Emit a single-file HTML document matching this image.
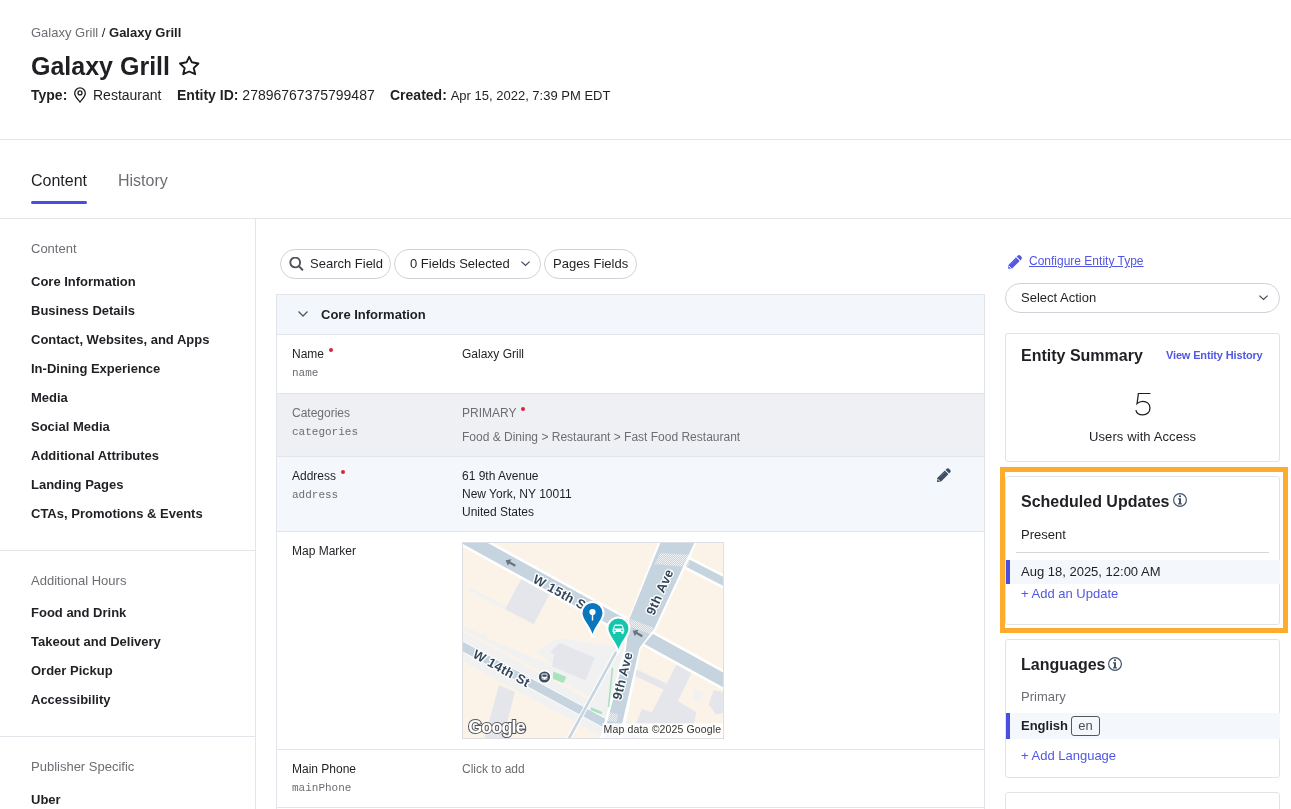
<!DOCTYPE html>
<html><head><meta charset="utf-8">
<style>
*{box-sizing:border-box;margin:0;padding:0}
html,body{width:1291px;height:809px;overflow:hidden;background:#fff}
body{-webkit-font-smoothing:antialiased}
.a{will-change:transform}
body{font-family:"Liberation Sans",sans-serif;color:#1f2024;position:relative}
.a{position:absolute;white-space:nowrap}
.b{font-weight:bold}
.g{color:#6c6e73}
.mono{font-family:"Liberation Mono",monospace}
.pill{position:absolute;height:30px;border:1px solid #cfd2d8;border-radius:15px;background:#fff}
.req{display:inline-block;width:4px;height:4px;border-radius:2px;background:#d9253a;vertical-align:top;margin:1px 0 0 5px}
.card{position:absolute;border:1px solid #e1e3e9;border-radius:3px;background:#fff}
.hl{position:absolute;background:#e3e5ea}
</style></head><body>
<!-- header -->
<div class="a" style="left:31px;top:25px;font-size:13px;line-height:15px"><span class="g">Galaxy Grill</span> / <span class="b">Galaxy Grill</span></div>
<div class="a b" style="left:31px;top:51px;font-size:25px;line-height:30px">Galaxy Grill</div>
<div class="a" style="left:178px;top:54px;width:24px;height:24px"><svg width="24" height="24" viewBox="0 0 24 24"><path d="M11.2 2.8L13.9 8.3L20.4 9.5L15.7 14.1L17.2 20.2L11.2 17.5L5.2 20.2L6.7 14.1L2 9.5L8.5 8.3Z" fill="none" stroke="#1a1a1a" stroke-width="1.9" stroke-linejoin="round"/></svg></div>
<div class="a" style="left:31px;top:87px;font-size:14px;line-height:16px"><span class="b">Type:</span></div>
<div class="a" style="left:72px;top:86px;width:16px;height:18px"><svg width="16" height="18" viewBox="0 0 16 18"><path d="M8 16.1C6.6 14 2.7 10.7 2.7 7.2A5.3 5.3 0 0 1 13.3 7.2C13.3 10.7 9.4 14 8 16.1Z" fill="none" stroke="#1a1a1a" stroke-width="1.3" stroke-linejoin="round"/><circle cx="8" cy="6.9" r="2" fill="none" stroke="#1a1a1a" stroke-width="1.3"/></svg></div>
<div class="a" style="left:93px;top:87px;font-size:14px;line-height:16px">Restaurant</div>
<div class="a" style="left:177px;top:87px;font-size:14px;line-height:16px"><span class="b">Entity ID:</span> 27896767375799487</div>
<div class="a" style="left:390px;top:87px;font-size:14px;line-height:16px"><span class="b">Created:</span> <span style="font-size:13px">Apr 15, 2022, 7:39 PM EDT</span></div>
<div class="hl" style="left:0;top:139px;width:1291px;height:1px"></div>

<!-- tabs -->
<div class="a" style="left:31px;top:172px;font-size:16px;line-height:18px">Content</div>
<div class="a g" style="left:118px;top:172px;font-size:16px;line-height:18px">History</div>
<div class="a" style="left:31px;top:201px;width:56px;height:3px;background:#4a4ee0;border-radius:2px"></div>
<div class="hl" style="left:0;top:218px;width:1291px;height:1px"></div>
<div class="hl" style="left:255px;top:219px;width:1px;height:590px"></div>

<!-- sidebar -->
<div class="a g" style="left:31px;top:241px;font-size:13px;line-height:15px">Content</div>
<div class="a b" style="left:31px;top:274px;font-size:13px;line-height:15px">Core Information</div>
<div class="a b" style="left:31px;top:303px;font-size:13px;line-height:15px">Business Details</div>
<div class="a b" style="left:31px;top:332px;font-size:13px;line-height:15px">Contact, Websites, and Apps</div>
<div class="a b" style="left:31px;top:361px;font-size:13px;line-height:15px">In-Dining Experience</div>
<div class="a b" style="left:31px;top:390px;font-size:13px;line-height:15px">Media</div>
<div class="a b" style="left:31px;top:419px;font-size:13px;line-height:15px">Social Media</div>
<div class="a b" style="left:31px;top:448px;font-size:13px;line-height:15px">Additional Attributes</div>
<div class="a b" style="left:31px;top:477px;font-size:13px;line-height:15px">Landing Pages</div>
<div class="a b" style="left:31px;top:506px;font-size:13px;line-height:15px">CTAs, Promotions &amp; Events</div>
<div class="hl" style="left:0;top:550px;width:255px;height:1px"></div>
<div class="a g" style="left:31px;top:573px;font-size:13px;line-height:15px">Additional Hours</div>
<div class="a b" style="left:31px;top:605px;font-size:13px;line-height:15px">Food and Drink</div>
<div class="a b" style="left:31px;top:634px;font-size:13px;line-height:15px">Takeout and Delivery</div>
<div class="a b" style="left:31px;top:663px;font-size:13px;line-height:15px">Order Pickup</div>
<div class="a b" style="left:31px;top:692px;font-size:13px;line-height:15px">Accessibility</div>
<div class="hl" style="left:0;top:736px;width:255px;height:1px"></div>
<div class="a g" style="left:31px;top:759px;font-size:13px;line-height:15px">Publisher Specific</div>
<div class="a b" style="left:31px;top:792px;font-size:13px;line-height:15px">Uber</div>

<!-- table -->
<div class="pill" style="left:280px;top:249px;width:111px"></div>
<svg class="a" style="left:288px;top:257px" width="16" height="15" viewBox="0 0 16 15"><circle cx="7.2" cy="5.5" r="4.9" fill="none" stroke="#515358" stroke-width="1.9"/><path d="M10.8 9.1l3.6 3.7" stroke="#515358" stroke-width="2" stroke-linecap="round"/></svg>
<div class="a" style="left:310px;top:256px;font-size:13px;line-height:15px">Search Field</div>
<div class="pill" style="left:394px;top:249px;width:147px"></div>
<div class="a" style="left:410px;top:256px;font-size:13px;line-height:15px">0 Fields Selected</div>
<svg class="a" style="left:520px;top:259px" width="11" height="9" viewBox="0 0 11 9"><path d="M1.4 2.6l4.1 3.9 4.1-3.9" fill="none" stroke="#3e4c5e" stroke-width="1.2"/></svg>
<div class="pill" style="left:544px;top:249px;width:93px"></div>
<div class="a" style="left:553px;top:256px;font-size:13px;line-height:15px">Pages Fields</div>
<div class="a" style="left:276px;top:294px;width:709px;height:515px;border:1px solid #e1e4ea;border-bottom:none"></div>
<div class="a" style="left:277px;top:295px;width:707px;height:40px;background:#f3f6fb;border-bottom:1px solid #e1e4ea"></div>
<svg class="a" style="left:297px;top:309px" width="12" height="10" viewBox="0 0 12 10"><path d="M1.5 2.5l4.5 4.5 4.5-4.5" fill="none" stroke="#4a5a6e" stroke-width="1.3"/></svg>
<div class="a b" style="left:321px;top:307px;font-size:13px;line-height:15px">Core Information</div>
<div class="a" style="left:277px;top:393px;width:707px;height:63px;background:#eff0f4;border-top:1px solid #e1e4ea"></div>
<div class="a" style="left:277px;top:456px;width:707px;height:75px;background:#f4f7fc;border-top:1px solid #e1e4ea"></div>
<div class="hl" style="left:277px;top:531px;width:707px;height:1px;background:#e1e4ea"></div>
<div class="hl" style="left:277px;top:749px;width:707px;height:1px;background:#e1e4ea"></div>
<div class="hl" style="left:277px;top:807px;width:707px;height:1px;background:#e1e4ea"></div>
<div class="a" style="left:292px;top:347px;font-size:12px;line-height:14px">Name<span class="req"></span></div>
<div class="a mono g" style="left:292px;top:367px;font-size:11px;line-height:13px">name</div>
<div class="a" style="left:462px;top:347px;font-size:12px;line-height:14px">Galaxy Grill</div>
<div class="a g" style="left:292px;top:406px;font-size:12px;line-height:14px">Categories</div>
<div class="a mono g" style="left:292px;top:426px;font-size:11px;line-height:13px">categories</div>
<div class="a g" style="left:462px;top:406px;font-size:12px;line-height:14px">PRIMARY<span class="req"></span></div>
<div class="a g" style="left:462px;top:430px;font-size:12px;line-height:14px">Food &amp; Dining &gt; Restaurant &gt; Fast Food Restaurant</div>
<div class="a" style="left:292px;top:469px;font-size:12px;line-height:14px">Address<span class="req"></span></div>
<div class="a mono g" style="left:292px;top:489px;font-size:11px;line-height:13px">address</div>
<div class="a" style="left:462px;top:467px;font-size:12px;line-height:18px">61 9th Avenue<br>New York, NY 10011<br>United States</div>
<svg class="a" style="left:936px;top:467px" width="16" height="16" viewBox="0 0 16 16"><g transform="translate(1.0,15.0) rotate(-45)"><path d="M0 0 L2.9 -2.6 L15.9 -2.6 Q17.9 -2.6 17.9 -0.6 L17.9 0.6 Q17.9 2.6 15.9 2.6 L2.9 2.6 Z" fill="#3d4f63"/><path d="M14.1 -3 L14.1 3" stroke="#f4f7fc" stroke-width="1"/><path d="M2.5 -1.5 L2.5 1.6" stroke="#f4f7fc" stroke-width="0.9" stroke-linecap="round"/><path d="M5.7 -1.5 L12.5 -1.5" stroke="#f4f7fc" stroke-width="0.5" stroke-dasharray="0.6 0.7" opacity="0.7"/></g></svg>
<div class="a" style="left:292px;top:544px;font-size:12px;line-height:14px">Map Marker</div>
<svg class="a" style="left:462px;top:542px" width="262" height="197" viewBox="0 0 262 197">
<defs><clipPath id="mc"><rect x="0" y="0" width="262" height="197"/></clipPath><pattern id="hx" width="2" height="2" patternUnits="userSpaceOnUse"><rect width="1" height="1" fill="#fff" opacity="0.7"/><rect x="1" y="1" width="1" height="1" fill="#fff" opacity="0.7"/></pattern></defs>
<g clip-path="url(#mc)">
<rect width="262" height="197" fill="#fbf3e8"/>
<polygon points="-5.0,84.0 160.0,172.0 168.0,108.0 150.0,104.0 100.0,96.0 88.0,100.0 74.0,110.0 60.0,98.0 20.0,92.0 -5.0,82.0" fill="#f1f1f2"/>
<polygon points="25.0,96.0 96.0,126.0 74.0,110.0 60.0,98.0 25.0,80.0" fill="#fbf3e8"/>
<line x1="-10" y1="98.7" x2="272" y2="251" stroke="#f1f1f2" stroke-width="26"/>
<polygon points="123.0,114.0 150.0,104.0 170.0,108.0 150.0,180.0 128.0,168.0" fill="#f1f1f2"/>
<line x1="7.4" y1="47" x2="43.2" y2="65.5" stroke="#f1f1f2" stroke-width="3.5"/>
<polygon points="60.5,34.6 87.7,51.9 71.7,82.2 43.2,67.3" fill="#e5e6eb"/>
<polygon points="97.6,101.0 132.8,115.8 123.6,138.6 90.2,124.4 92.0,112.0 88.0,110.0" fill="#e5e6eb"/>
<polygon points="37.0,143.0 53.0,150.0 40.8,197.0 22.2,197.0" fill="#e5e6eb"/>
<polygon points="171.3,125.7 204.6,141.7 202.2,147.9 171.3,133.1" fill="#e5e6eb"/>
<polygon points="214.5,122.6 229.4,131.2 215.8,159.0 234.3,170.2 231.8,182.5 173.7,182.5 179.9,167.1 189.8,170.2 202.2,146.7 207.1,136.8" fill="#e5e6eb"/>
<polygon points="251.6,147.9 262.7,150.4 262.7,170.2 254.1,172.6 246.7,162.7" fill="#e5e6eb"/>
<polygon points="231.8,146.7 241.7,150.4 236.8,160.3 230.6,157.8" fill="#f1f1f2"/>
<line x1="-10" y1="-11.3" x2="272" y2="143.8" stroke="#ffffff" stroke-width="18"/><line x1="-10" y1="-11.3" x2="272" y2="143.8" stroke="#c6d4df" stroke-width="13"/>
<line x1="200" y1="8" x2="272" y2="45" stroke="#ffffff" stroke-width="13"/><line x1="200" y1="8" x2="272" y2="45" stroke="#c6d4df" stroke-width="8"/>
<line x1="-10" y1="98.7" x2="272" y2="251" stroke="#ffffff" stroke-width="10.0"/><line x1="-10" y1="98.7" x2="272" y2="251" stroke="#c6d4df" stroke-width="8.5"/>
<line x1="154" y1="110" x2="105" y2="200" stroke="#ffffff" stroke-width="4.6"/><line x1="154" y1="110" x2="105" y2="200" stroke="#c6d4df" stroke-width="2.6"/>
<polygon points="197.0,-2.0 236.0,-2.0 194.0,88.0 179.0,106.0 160.0,200.0 137.0,200.0 162.0,108.0 166.0,78.0" fill="#ffffff"/>
<polygon points="199.5,-2.0 233.6,-2.0 192.3,86.5 177.4,105.9 156.0,200.0 140.0,200.0 163.8,108.4 167.6,76.6" fill="#c6d4df"/>
<polygon points="198.0,11.0 230.0,13.0 226.0,25.0 193.0,22.0" fill="url(#hx)"/>
<polygon points="169.0,77.0 192.0,86.0 188.0,92.0 166.0,84.0" fill="url(#hx)"/>
<polygon points="146.0,170.0 156.0,172.0 155.0,180.0 145.0,179.0" fill="url(#hx)"/>
<polygon points="91.4,129.4 104.4,134.9 101.3,141.1 90.8,136.8" fill="#a9e2bd"/>
<polygon points="129.2,165.2 140.4,170.0 139.5,172.5 128.5,168.0" fill="#a9e2bd"/>
<line x1="150.5" y1="126" x2="146.5" y2="165" stroke="#a9e2bd" stroke-width="1.6"/>
<g fill="#6b747e">
<path transform="translate(48.5,21) rotate(29)" d="M-5.5 0 L-1 -3.6 L-1 -1.1 L5.5 -1.1 L5.5 1.1 L-1 1.1 L-1 3.6 Z"/>
<path transform="translate(175.5,91.5) rotate(29)" d="M-5.5 0 L-1 -3.6 L-1 -1.1 L5.5 -1.1 L5.5 1.1 L-1 1.1 L-1 3.6 Z"/>
</g>
<text transform="translate(70,40) rotate(29)" style="font-family:Liberation Sans,sans-serif;font-weight:bold;font-size:13px;fill:#34475a;stroke:#fff;stroke-width:2.6px;paint-order:stroke;stroke-linejoin:round;letter-spacing:0.4px">W 15th St</text>
<text transform="translate(10,115) rotate(29)" style="font-family:Liberation Sans,sans-serif;font-weight:bold;font-size:13px;fill:#34475a;stroke:#fff;stroke-width:2.6px;paint-order:stroke;stroke-linejoin:round;letter-spacing:0.4px">W 14th St</text>
<text transform="translate(192,74) rotate(-66)" style="font-family:Liberation Sans,sans-serif;font-weight:bold;font-size:13px;fill:#34475a;stroke:#fff;stroke-width:2.6px;paint-order:stroke;stroke-linejoin:round;letter-spacing:0.4px">9th Ave</text>
<text transform="translate(159,158.5) rotate(-76)" style="font-family:Liberation Sans,sans-serif;font-weight:bold;font-size:13px;fill:#34475a;stroke:#fff;stroke-width:2.6px;paint-order:stroke;stroke-linejoin:round;letter-spacing:0.4px">9th Ave</text>
<circle cx="82.5" cy="135" r="6.9" fill="#fff"/><circle cx="82.5" cy="135" r="5.6" fill="#3d4b5c"/><rect x="79.6" y="131.6" width="5.8" height="6.2" rx="1" fill="#fff"/><rect x="80.4" y="132.5" width="4.2" height="2.3" fill="#3d4b5c"/><rect x="80.2" y="136.4" width="1.2" height="1" fill="#3d4b5c"/><rect x="83.6" y="136.4" width="1.2" height="1" fill="#3d4b5c"/>
<path d="M130.5 96 C129.0 84.75 119.5 79.25 119.5 71 A11 11 0 0 1 141.5 71 C141.5 79.25 132.0 84.75 130.5 96Z" fill="#0a76bd" stroke="#fff" stroke-width="2"/>
<circle cx="130.5" cy="70" r="3.1" fill="#fff"/><rect x="129.8" y="71" width="1.4" height="7.5" fill="#fff"/>
<path d="M156.4 111 C154.9 100.25 145.4 94.75 145.4 86.5 A11 11 0 0 1 167.4 86.5 C167.4 94.75 157.9 100.25 156.4 111Z" fill="#14c6ab" stroke="#fff" stroke-width="2"/>
<path transform="translate(156.4,86.5)" d="M-5.8 1 L-4.5 -2.6 Q-4 -4 -2.6 -4 L2.6 -4 Q4 -4 4.5 -2.6 L5.8 1 L5.8 3.6 L-5.8 3.6 Z" fill="#fff"/><path transform="translate(156.4,86.5)" d="M-3.6 -2.6 L3.6 -2.6 L4.3 0 L-4.3 0 Z" fill="#14c6ab"/><circle cx="152.9" cy="88.3" r="0.9" fill="#14c6ab"/><circle cx="159.9" cy="88.3" r="0.9" fill="#14c6ab"/><rect x="151.2" y="90" width="2.2" height="1.8" fill="#fff"/><rect x="159.4" y="90" width="2.2" height="1.8" fill="#fff"/>
<rect x="140.4" y="181.3" width="122" height="16" fill="#fff" fill-opacity="0.85"/>
<text x="141.6" y="191.3" style="font-family:Liberation Sans,sans-serif;font-size:10.5px;fill:#333;letter-spacing:0.15px">Map data ©2025 Google</text>
<text x="6.2" y="191" style="font-family:Liberation Sans,sans-serif;font-weight:bold;font-size:18px;fill:#fff;stroke:#56585c;stroke-width:2px;paint-order:stroke;letter-spacing:-0.9px">Google</text>
</g><rect x="0.5" y="0.5" width="261" height="196" fill="none" stroke="#dcdee3"/></svg>
<div class="a" style="left:292px;top:762px;font-size:12px;line-height:14px">Main Phone</div>
<div class="a mono g" style="left:292px;top:782px;font-size:11px;line-height:13px">mainPhone</div>
<div class="a g" style="left:462px;top:762px;font-size:12px;line-height:14px">Click to add</div>

<!-- right -->
<svg class="a" style="left:1007px;top:254px" width="16" height="16" viewBox="0 0 16 16"><g transform="translate(1.2,14.8) rotate(-45)"><path d="M0 0 L2.9 -2.6 L15.9 -2.6 Q17.9 -2.6 17.9 -0.6 L17.9 0.6 Q17.9 2.6 15.9 2.6 L2.9 2.6 Z" fill="#5257e3"/><path d="M14.1 -3 L14.1 3" stroke="#fff" stroke-width="1"/><path d="M2.5 -1.5 L2.5 1.6" stroke="#fff" stroke-width="0.9" stroke-linecap="round"/><path d="M5.7 -1.5 L12.5 -1.5" stroke="#fff" stroke-width="0.5" stroke-dasharray="0.6 0.7" opacity="0.7"/></g></svg>
<div class="a" style="left:1029px;top:254px;font-size:12px;line-height:14px;color:#5257e3;text-decoration:underline;text-underline-offset:1px">Configure Entity Type</div>
<div class="pill" style="left:1005px;top:283px;width:275px;height:30px"></div>
<div class="a" style="left:1021px;top:290px;font-size:13px;line-height:15px">Select Action</div>
<svg class="a" style="left:1258px;top:293px" width="11" height="9" viewBox="0 0 11 9"><path d="M1.4 2.6l4.1 3.9 4.1-3.9" fill="none" stroke="#3e4c5e" stroke-width="1.2"/></svg>
<div class="card" style="left:1005px;top:333px;width:275px;height:129px"></div>
<div class="a b" style="left:1021px;top:347px;font-size:16px;line-height:18px">Entity Summary</div>
<div class="a b" style="left:1166px;top:349px;font-size:11px;line-height:13px;color:#5257e3;letter-spacing:-0.15px">View Entity History</div>
<svg class="a" style="left:1134px;top:392px" width="19" height="25" viewBox="0 0 19 25"><g transform="translate(0.3,0) scale(0.98,0.93)"><path d="M16.5 1.6H4.2L2.8 12.6c1.6-1.8 3.6-2.6 5.9-2.6 4.3 0 7.3 3 7.3 7.2 0 4.4-3.1 7.5-7.4 7.5-3.6 0-6.3-2-7-5.2" fill="none" stroke="#1f2024" stroke-width="1.3"/></g></svg>
<div class="a" style="left:1089px;top:429px;font-size:13px;line-height:15px;letter-spacing:0.1px">Users with Access</div>
<div class="a" style="left:1000px;top:467px;width:288px;height:166px;border:5px solid #fdac2e"></div>
<div class="card" style="left:1005px;top:476px;width:275px;height:149px"></div>
<div class="a b" style="left:1021px;top:493px;font-size:16px;line-height:18px">Scheduled Updates</div>
<svg class="a" style="left:1173px;top:493px" width="15" height="15" viewBox="0 0 15 15"><circle cx="7" cy="7" r="6.4" fill="none" stroke="#425669" stroke-width="1.2"/><rect x="6" y="2.4" width="2" height="1.7" fill="#425669"/><path d="M5 5.3H8V10.2H8.9V11.5H5V10.2H6V6.5H5Z" fill="#425669"/></svg>
<div class="a" style="left:1021px;top:527px;font-size:13px;line-height:15px">Present</div>
<div class="hl" style="left:1016px;top:552px;width:253px;height:1px;background:#d5d7dd"></div>
<div class="a" style="left:1006px;top:560px;width:274px;height:24px;background:#f4f7fc;border-left:4px solid #4a4ee0"></div>
<div class="a" style="left:1021px;top:564px;font-size:13px;line-height:15px">Aug 18, 2025, 12:00 AM</div>
<div class="a" style="left:1021px;top:586px;font-size:13px;line-height:15px;color:#5257e3">+ Add an Update</div>
<div class="card" style="left:1005px;top:639px;width:275px;height:139px"></div>
<div class="a b" style="left:1021px;top:656px;font-size:16px;line-height:18px">Languages</div>
<svg class="a" style="left:1108px;top:657px" width="15" height="15" viewBox="0 0 15 15"><circle cx="7" cy="7" r="6.4" fill="none" stroke="#425669" stroke-width="1.2"/><rect x="6" y="2.4" width="2" height="1.7" fill="#425669"/><path d="M5 5.3H8V10.2H8.9V11.5H5V10.2H6V6.5H5Z" fill="#425669"/></svg>
<div class="a g" style="left:1021px;top:689px;font-size:13px;line-height:15px">Primary</div>
<div class="a" style="left:1006px;top:713px;width:274px;height:26px;background:#f4f7fc;border-left:4px solid #4a4ee0"></div>
<div class="a b" style="left:1021px;top:718px;font-size:13px;line-height:15px">English</div>
<div class="a" style="left:1071px;top:716px;width:29px;height:20px;border:1px solid #55575c;border-radius:3px;font-size:13px;line-height:18px;text-align:center;color:#4d4f55">en</div>
<div class="a" style="left:1021px;top:748px;font-size:13px;line-height:15px;color:#5257e3">+ Add Language</div>
<div class="card" style="left:1005px;top:792px;width:275px;height:40px"></div>
</body></html>
